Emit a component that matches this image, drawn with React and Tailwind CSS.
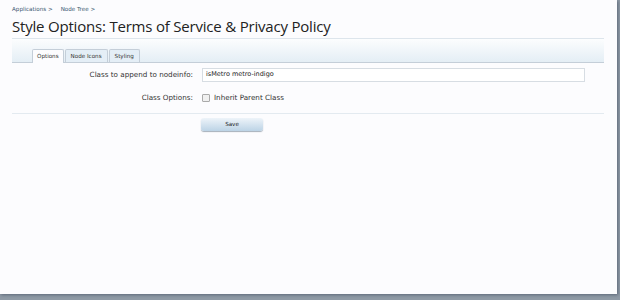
export default function App() {
  const tabs = ['Options', 'Node Icons', 'Styling'];
  return (
    <div className="h-[300px] w-[620px] bg-[#8f9aa6]">
      <div className="h-[294px] w-[617px] bg-[#fcfcfe] pt-[5px] pl-[12px] pr-[13px] shadow-[1px_1px_3px_rgba(60,70,90,0.6)]">
        <div className="flex h-[9px] items-center gap-[8px] text-[5.6px] text-[#3a5670]" style={{ fontFamily: '"DejaVu Sans", sans-serif' }}>
          <span>Applications &gt;</span>
          <span>Node Tree &gt;</span>
        </div>
        <h1 className="mt-[2px] border-b border-[#dde5ec] pb-[2px] text-[15px] leading-[20px] tracking-[-0.2px] text-[#222]" style={{ fontFamily: '"Open Sans", sans-serif' }}>
          Style Options: Terms of Service &amp; Privacy Policy
        </h1>

        <div className="flex h-[24px] items-end border-b border-[#c4ced8] bg-gradient-to-b from-[#fcfdfe] to-[#e4eef5] pl-[20px]">
          {tabs.map((t, i) => (
            <div
              key={t}
              className={
                i === 0
                  ? 'mb-[-1px] flex h-[14px] items-center rounded-t-[2px] border border-b-0 border-[#c4ced8] bg-[#fcfcfe] px-[4px] text-[5.6px] text-[#333]'
                  : 'ml-[1px] flex h-[13px] items-center rounded-t-[2px] border border-b-0 border-[#c4ced8] bg-[#e4eef6] px-[5px] text-[5.6px] text-[#333]'
              }
              style={{ fontFamily: '"DejaVu Sans", sans-serif' }}
            >
              {t}
            </div>
          ))}
        </div>

        <div className="text-[7.2px] text-[#333]" style={{ fontFamily: '"DejaVu Sans", sans-serif' }}>
          <div className="mt-[5px] flex items-center">
            <div className="w-[190px] shrink-0 pr-[9px] text-right">Class to append to nodeinfo:</div>
            <div className="flex h-[14px] w-[383px] items-center border border-[#d7dde3] bg-white px-[3px] text-[6.5px] text-[#222]">
              isMetro metro-indigo
            </div>
          </div>
          <div className="mt-[11px] flex h-[10px] items-center">
            <div className="w-[190px] shrink-0 pr-[9px] text-right">Class Options:</div>
            <label className="flex items-center gap-[4px]">
              <span className="h-[8px] w-[8px] rounded-[1px] border border-[#aaa] bg-[#f0f0f0]" />
              <span>Inherit Parent Class</span>
            </label>
          </div>
        </div>

        <div className="mt-[10px] border-t border-[#e3eaf0]" />
        <div className="mt-[4px] flex pl-[189px]">
          <button className="h-[13px] w-[62px] rounded-[3px] bg-gradient-to-b from-[#eef4f9] to-[#bcd3e6] text-[5.6px] text-[#222] shadow-[0_1px_1px_rgba(80,100,120,0.5)]" style={{ fontFamily: '"DejaVu Sans", sans-serif' }}>
            Save
          </button>
        </div>
      </div>
    </div>
  );
}
